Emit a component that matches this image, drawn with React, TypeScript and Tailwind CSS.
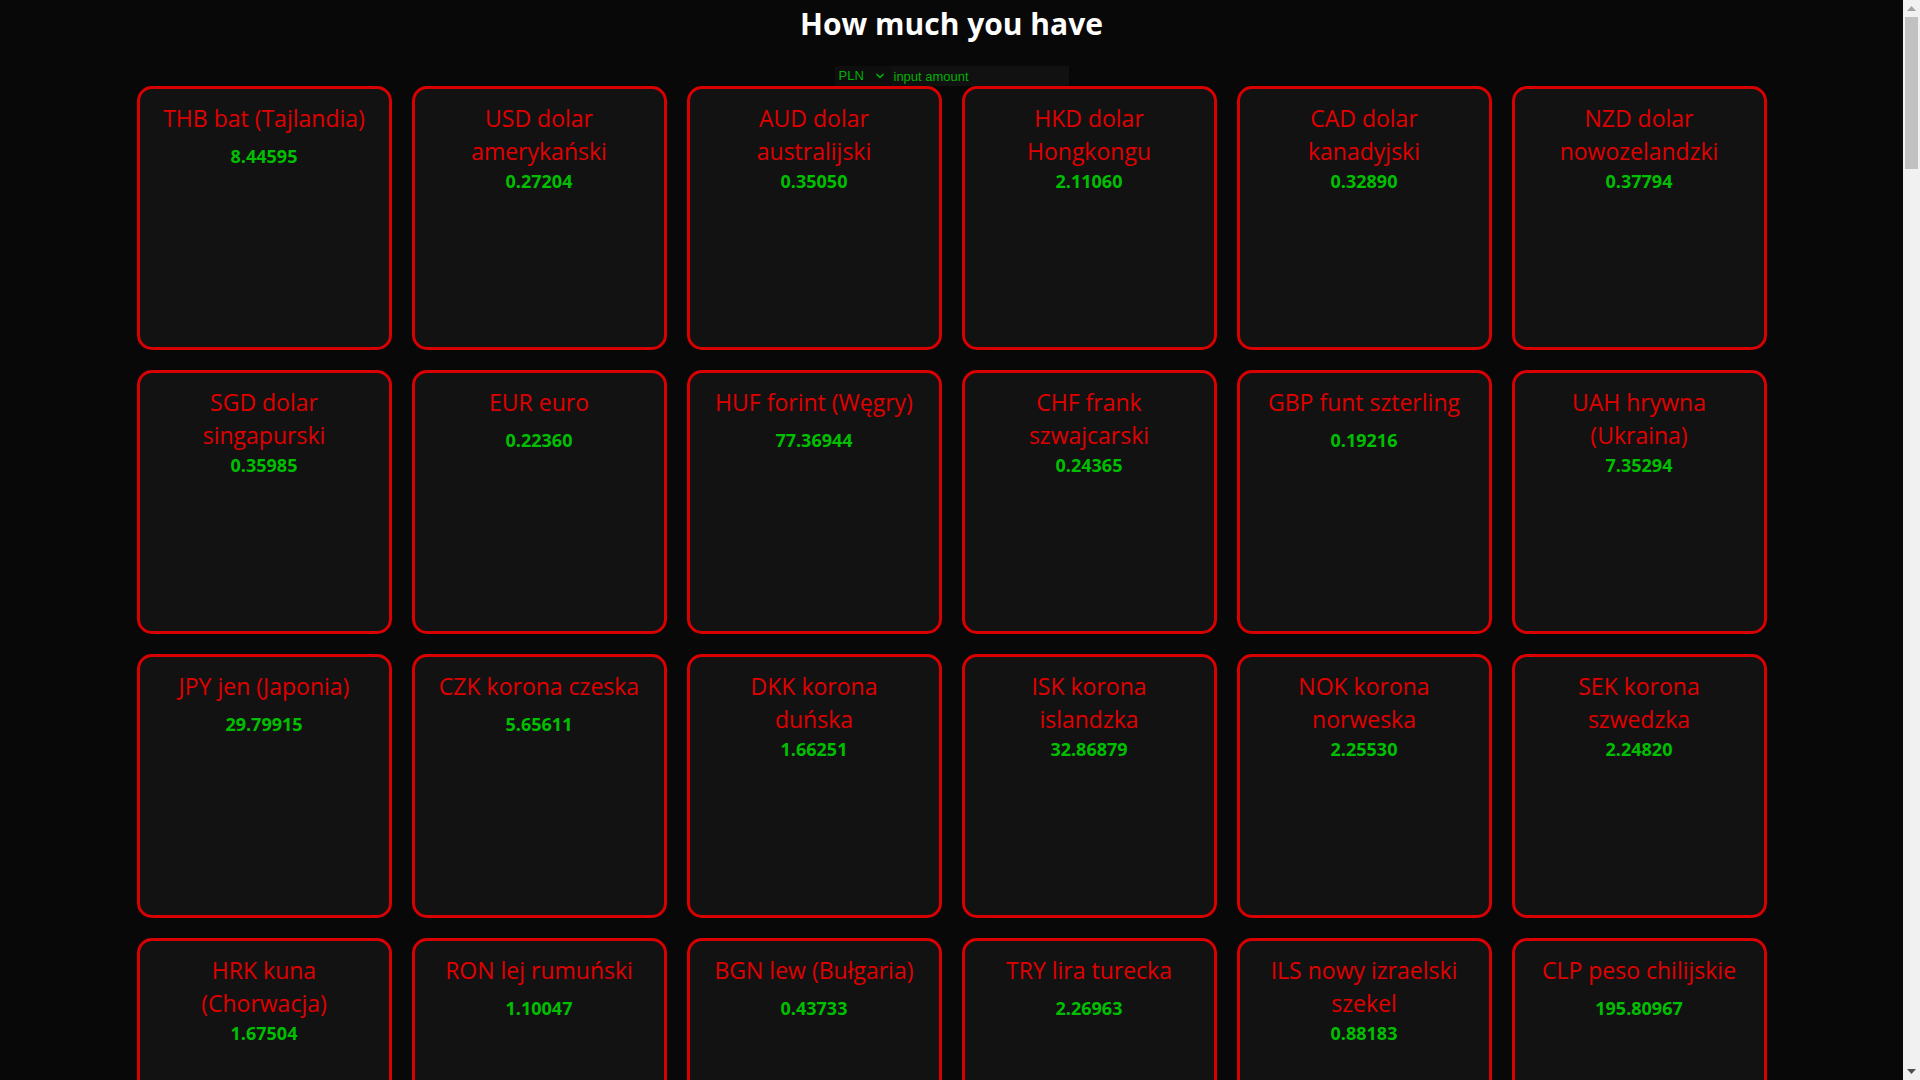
import { ChevronDown } from "lucide-react";

type Rate = { lines: string[]; value: string };

const rates: Rate[] = [
  { lines: ["THB bat (Tajlandia)"], value: "8.44595" },
  { lines: ["USD dolar", "amerykański"], value: "0.27204" },
  { lines: ["AUD dolar", "australijski"], value: "0.35050" },
  { lines: ["HKD dolar", "Hongkongu"], value: "2.11060" },
  { lines: ["CAD dolar", "kanadyjski"], value: "0.32890" },
  { lines: ["NZD dolar", "nowozelandzki"], value: "0.37794" },
  { lines: ["SGD dolar", "singapurski"], value: "0.35985" },
  { lines: ["EUR euro"], value: "0.22360" },
  { lines: ["HUF forint (Węgry)"], value: "77.36944" },
  { lines: ["CHF frank", "szwajcarski"], value: "0.24365" },
  { lines: ["GBP funt szterling"], value: "0.19216" },
  { lines: ["UAH hrywna", "(Ukraina)"], value: "7.35294" },
  { lines: ["JPY jen (Japonia)"], value: "29.79915" },
  { lines: ["CZK korona czeska"], value: "5.65611" },
  { lines: ["DKK korona", "duńska"], value: "1.66251" },
  { lines: ["ISK korona", "islandzka"], value: "32.86879" },
  { lines: ["NOK korona", "norweska"], value: "2.25530" },
  { lines: ["SEK korona", "szwedzka"], value: "2.24820" },
  { lines: ["HRK kuna", "(Chorwacja)"], value: "1.67504" },
  { lines: ["RON lej rumuński"], value: "1.10047" },
  { lines: ["BGN lew (Bułgaria)"], value: "0.43733" },
  { lines: ["TRY lira turecka"], value: "2.26963" },
  { lines: ["ILS nowy izraelski", "szekel"], value: "0.88183" },
  { lines: ["CLP peso chilijskie"], value: "195.80967" },
];

function RateCard({ rate }: { rate: Rate }) {
  const single = rate.lines.length === 1;
  return (
    <div className="h-[264px] rounded-[15px] border-[3px] border-[#d80000] bg-[#121212] px-3 pt-[13px] text-center">
      <h2 className="text-[23px] leading-[33px] font-normal text-[#e00000]">
        {rate.lines.map((l) => (
          <div key={l} className="whitespace-nowrap">
            {l}
          </div>
        ))}
      </h2>
      <p
        className={
          single
            ? "mt-[9px] text-[18px] leading-[24px] font-bold text-[#00bf00]"
            : "mt-[1px] text-[18px] leading-[24px] font-bold text-[#00bf00]"
        }
      >
        {rate.value}
      </p>
    </div>
  );
}

// windows-style scrollbar, the page is long
function Scrollbar() {
  return (
    <div className="sticky top-0 flex h-screen w-[17px] shrink-0 flex-col bg-[#f1f1f1]">
      <div className="flex h-[17px] items-center justify-center">
        <svg width="9" height="5" viewBox="0 0 9 5">
          <path d="M0 5 L4.5 0 L9 5 Z" fill="#a3a3a3" />
        </svg>
      </div>
      <div className="mx-[2px] h-[152px] bg-[#c1c1c1]" />
      <div className="flex-1" />
      <div className="flex h-[17px] items-center justify-center">
        <svg width="9" height="5" viewBox="0 0 9 5">
          <path d="M0 0 L4.5 5 L9 0 Z" fill="#505050" />
        </svg>
      </div>
    </div>
  );
}

export default function App() {
  return (
    <div className="flex bg-[#080808] font-['Open_Sans','Noto_Sans',sans-serif]">
      <main className="min-h-[7430px] flex-1">
        <h1 className="pt-[2px] text-center text-[30px] leading-[44px] font-bold text-white">
          How much you have
        </h1>
        <div className="mt-[20px] flex justify-center">
          <div className="flex h-[20px] items-center font-['Liberation_Sans',sans-serif] text-[13px] text-[#00b000]">
            <div className="flex h-full w-[57px] items-center bg-[#0e0e0e] pl-[4px]">
              <span>PLN</span>
              <ChevronDown className="ml-[10px] h-[12px] w-[12px]" strokeWidth={3.5} />
            </div>
            <input
              placeholder="input amount"
              className="h-full w-[177px] bg-[#111111] px-[2px] outline-none placeholder:text-[#00b000]"
            />
          </div>
        </div>
        <div className="mx-auto grid w-[1630px] grid-cols-6 gap-[20px]">
          {rates.map((r) => (
            <RateCard key={r.value} rate={r} />
          ))}
        </div>
      </main>
      <Scrollbar />
    </div>
  );
}
